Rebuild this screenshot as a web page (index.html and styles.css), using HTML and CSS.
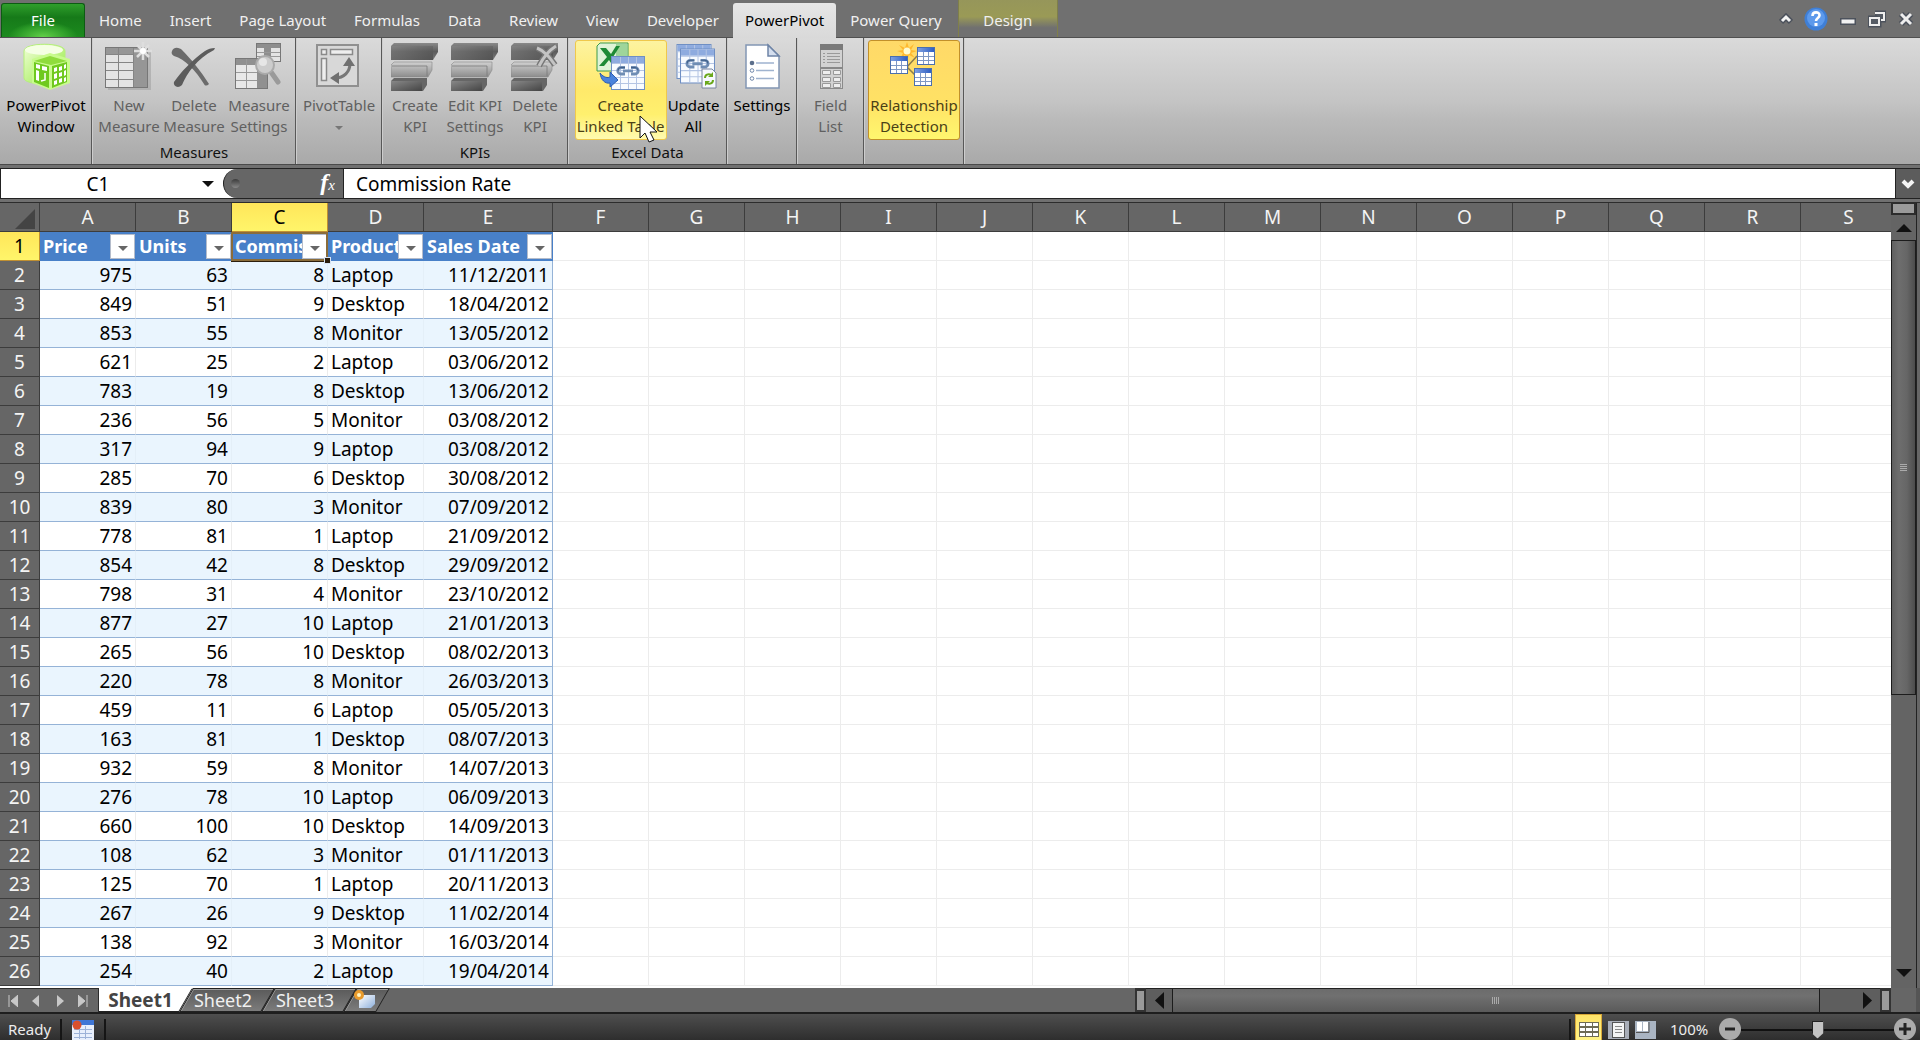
FILE: index.html
```html
<!DOCTYPE html>
<html lang="en">
<head>
<meta charset="utf-8">
<title>Workbook - PowerPivot</title>
<link rel="stylesheet" href="styles.css">
</head>
<body>
<svg class="defs" aria-hidden="true">
  <defs>
    <linearGradient id="barDark" x1="0" y1="0" x2="0" y2="1"><stop offset="0" stop-color="#8a8a8a"/><stop offset=".5" stop-color="#5c5c5c"/><stop offset="1" stop-color="#777"/></linearGradient>
    <linearGradient id="barLight" x1="0" y1="0" x2="0" y2="1"><stop offset="0" stop-color="#d0d0d0"/><stop offset="1" stop-color="#8c8c8c"/></linearGradient>
    <linearGradient id="barDeep" x1="0" y1="0" x2="1" y2="1"><stop offset="0" stop-color="#888"/><stop offset="1" stop-color="#444"/></linearGradient>
    <linearGradient id="green" x1="0" y1="0" x2="1" y2="1"><stop offset="0" stop-color="#f2ffd8"/><stop offset="1" stop-color="#8fe83a"/></linearGradient>
    <linearGradient id="blueHead" x1="0" y1="0" x2="1" y2="0"><stop offset="0" stop-color="#7d9fe0"/><stop offset="1" stop-color="#2f5fc4"/></linearGradient>
    <linearGradient id="sheetPaper" x1="0" y1="0" x2="1" y2="1"><stop offset="0" stop-color="#fff"/><stop offset="1" stop-color="#8eb0dc"/></linearGradient>
    <symbol id="bars" viewBox="0 0 48 50">
      <path d="M0 4l3-3h44v9l-5 8H0z" fill="url(#barDark)"/><path d="M0 4h42v14H0z" fill="url(#barDeep)" opacity=".7"/>
      <path d="M0 23l3-3h38v8l-4 7H0z" fill="url(#barLight)" stroke="#888" stroke-width=".6"/><path d="M1 24h35v10" fill="none" stroke="#7a7a7a" stroke-width=".8"/>
      <path d="M0 39l3-3h33v7l-4 6H0z" fill="#666"/><path d="M0 39h31v10H0z" fill="url(#barDeep)"/>
    </symbol>
    <symbol id="miniTable" viewBox="0 0 18 18">
      <rect x=".5" y=".5" width="17" height="17" fill="#fff" stroke="#4b6fae"/><rect x="1" y="1" width="16" height="4" fill="url(#blueHead)"/>
      <path d="M1 9.500h16M1 13.500h16M6.500 5v12M11.500 5v12" stroke="#7f98c4"/>
    </symbol>
    <symbol id="linkTable" viewBox="0 0 34 34">
      <rect x=".5" y=".5" width="33" height="33" fill="#f8fbff" stroke="#6f8fc4"/><rect x="1" y="1" width="32" height="6" fill="#8eabdf"/>
      <path d="M1 7.500h32M1 14.500h32M1 21.500h32M1 27.500h32M9.500 1v32M17.500 1v32M25.500 1v32" stroke="#b4c5e4"/>
      <path d="M14 11.500h-4a3 3 0 0 0 0 6.500h4M20 11.500h4a3 3 0 0 1 0 6.500h-4M12 14.800h10" fill="none" stroke="#6f8db4" stroke-width="2.800"/><path d="M14 11.500h-4a3 3 0 0 0-3 3M20 11.500h4a3 3 0 0 1 3 3" fill="none" stroke="#3f5f88" stroke-width="1"/>
    </symbol>
  </defs>
</svg>
<div class="app">
  <nav class="tabs">
    <button class="tab file">File</button>
    <button class="tab">Home</button>
    <button class="tab">Insert</button>
    <button class="tab">Page Layout</button>
    <button class="tab">Formulas</button>
    <button class="tab">Data</button>
    <button class="tab">Review</button>
    <button class="tab">View</button>
    <button class="tab">Developer</button>
    <button class="tab active">PowerPivot</button>
    <button class="tab">Power Query</button>
    <button class="tab design">Design</button>
    <div class="window-tools">
      <button aria-label="Minimize ribbon"><svg width="14" height="12"><path d="M2 9l5-5 5 5" fill="none" stroke="#4c525c" stroke-width="6"/><path d="M3 8l4-4 4 4" fill="none" stroke="#f4f4f4" stroke-width="3"/></svg></button>
      <button aria-label="Help"><svg width="24" height="24"><circle cx="12" cy="12" r="11.500" fill="#3f7fd6"/><circle cx="12" cy="11" r="9" fill="#5d9aec"/><path d="M8.500 9c0-5 7-4.500 7-.8 0 3-3.500 2.500-3.500 5.800" fill="none" stroke="#fff" stroke-width="2.600"/><rect x="10.500" y="16" width="3" height="3" fill="#fff"/></svg></button>
      <button aria-label="Minimize"><svg width="18" height="18"><rect x="1" y="8" width="16" height="7" fill="#4c525c"/><rect x="2.500" y="9.500" width="13" height="4" fill="#f2f2f2"/></svg></button>
      <button aria-label="Restore"><svg width="18" height="18"><path d="M7 3h9v7h-3M2 8h9v7H2z" fill="none" stroke="#4c525c" stroke-width="5"/><path d="M7 3h9v7h-3M2 8h9v7H2z" fill="#555b64" stroke="#eee" stroke-width="2"/></svg></button>
      <button aria-label="Close"><svg width="18" height="18"><path d="M4 4l10 10M14 4L4 14" stroke="#4c525c" stroke-width="6"/><path d="M4 4l10 10M14 4L4 14" stroke="#eee" stroke-width="3"/></svg></button>
    </div>
  </nav>

  <section class="ribbon">
    <div class="group g-window"><div class="commands">
      <button class="cmd"><svg viewBox="0 0 48 48"><path d="M2 9C2 0 43 0 43 9v27c0 8-41 8-41 0z" fill="url(#green)" stroke="#b5f07a"/><ellipse cx="22" cy="8" rx="19" ry="5" fill="#f5ffe4"/><path d="M10 17l18-6 20 6v24l-20 7-18-7z" fill="#c9fb8e"/><path d="M12 19l16-5 17 5-16 4z" fill="#8fdc3c"/><path d="M12 20l15 4v22l-15-6zM30 24l15-4v20l-15 6z" fill="#6fc91f"/><path d="M14 22l4 1v4l-4-1zM20 24l5 1v4l-5-1zM14 28l3 1v10l-3-1zM32 26l3-1v4l-3 1zM37 25l3-1v4l-3 1zM42 23l2-1v4l-2 1zM32 32l3-1v5l-3 1zM37 31l3-1v4l-3 1zM42 29l2-1v5l-2 1zM32 39l3-1v4l-3 1zM37 37l3-1v4l-3 1zM42 36l2-1v4l-2 1z" fill="#fff"/><path d="M23 31v7l-4 1" fill="none" stroke="#fff" stroke-width="1.500"/></svg><span>PowerPivot<br>Window</span></button>
    </div></div>
    <div class="group g-measures"><div class="commands">
      <button class="cmd off"><svg viewBox="0 0 48 48"><rect x="3" y="8" width="43" height="40" fill="#999" opacity=".5"/><rect x=".5" y="5.500" width="42" height="40" fill="#e4e4e4" stroke="#777"/><path d="M1 6h41v6H1zM28 12h14v33H28z" fill="#969696"/><path d="M1 12.500h27M1 20.500h27M1 28.500h27M1 37.500h27M13.500 6v39M28.500 6v39" stroke="#858585"/><path d="M38 0v18M29 9h18M32 3l12 12M44 3L32 15" stroke="#dedede" stroke-width="2.500"/><circle cx="38" cy="9" r="3" fill="#fff"/></svg><span>New<br>Measure</span></button>
      <button class="cmd off"><svg viewBox="0 0 48 48"><path d="M2 9c2-5 8-3 10-1 9 9 18 20 27 34-2 2-4 2-5 0C26 29 15 17 4 14c-2-1-3-3-2-5z" fill="#6b6b6b"/><path d="M45 6c-4 0-7 1-10 3C23 17 10 31 4 40c-1 4 4 7 8 3C17 31 27 17 44 8z" fill="#5c5c5c"/></svg><span>Delete<br>Measure</span></button>
      <button class="cmd off"><svg viewBox="0 0 48 48"><rect x="21.500" y="1.500" width="24" height="18" fill="#e4e4e4" stroke="#777"/><path d="M22 2h23v4H22zM29 2h7v17h-7z" fill="#8e8e8e"/><path d="M22 10.500h23M22 14.500h23" stroke="#999"/><rect x=".5" y="16.500" width="32" height="30" fill="#e8e8e8" stroke="#777"/><path d="M1 17h31v6H1zM22 23h10v23H22z" fill="#909090"/><path d="M1 30.500h21M1 38.500h21M11.500 17v29" stroke="#999"/><path d="M36 30l7 10" stroke="#9a9a9a" stroke-width="5" stroke-linecap="round"/><circle cx="30" cy="23" r="9" fill="#ccc" stroke="#aaa" stroke-width="2"/><circle cx="28" cy="20" r="4" fill="#e6e6e6"/></svg><span>Measure<br>Settings</span></button>
    </div><div class="caption">Measures</div></div>
    <div class="group g-pivot"><div class="commands">
      <button class="cmd off"><svg viewBox="0 0 48 48"><rect x="2" y="3" width="41" height="41" fill="#d8d8d8" stroke="#909090" stroke-width="2"/><path d="M6.500 7.500h5v5h-5zM15.500 7.500h22v5h-22zM6.500 16.500h5v22h-5z" fill="#eee" stroke="#8a8a8a" stroke-width="1.500"/><path d="M20 36c9 0 15-6 15-15" fill="none" stroke="#777" stroke-width="3"/><path d="M28 24l6-9 6 9zM24 30l-9 6 9 6z" fill="#707070"/></svg><span>PivotTable<br><i class="caret small"></i></span></button>
    </div></div>
    <div class="group g-kpis"><div class="commands">
      <button class="cmd off"><svg viewBox="0 0 48 48"><use href="#bars" width="48" height="50"/></svg><span>Create<br>KPI</span></button>
      <button class="cmd off"><svg viewBox="0 0 48 48"><use href="#bars" width="48" height="50"/></svg><span>Edit KPI<br>Settings</span></button>
      <button class="cmd off"><svg viewBox="0 0 48 48"><use href="#bars" width="48" height="50"/><path d="M26 6c8 3 13 10 18 17M45 4c-8 5-13 12-17 20" fill="none" stroke="#777" stroke-width="6"/><path d="M26 6c8 3 13 10 18 17M45 4c-8 5-13 12-17 20" fill="none" stroke="#c4c4c4" stroke-width="3"/></svg><span>Delete<br>KPI</span></button>
    </div><div class="caption">KPIs</div></div>
    <div class="group g-excel"><div class="commands">
      <button class="cmd hover"><svg viewBox="0 0 48 48"><path d="M3 1h28v28H0V4z" fill="#dff3d6" stroke="#3d9a4a"/><path d="M19 2h11v26H19z" fill="#9fd59a"/><path d="M3 6h6l5 6 5-8h4l-7 11 6 9h-6l-4-6-5 6H2l8-9z" fill="#1e8a35"/><use href="#linkTable" x="14" y="14" width="34" height="34"/><path d="M3 31c4 5 8 5 10 4v-5l8 8-8 7v-4C8 42 4 38 3 31z" fill="#4a83dc" stroke="#2b5cb0"/></svg><span>Create<br>Linked Table</span></button>
      <button class="cmd narrow"><svg viewBox="0 0 48 48"><use href="#linkTable" x="6" y="2" width="36" height="35"/><use href="#linkTable" x="10" y="6" width="35" height="36"/><path d="M32 27h10l4 4v15H32z" fill="#f6f9ff" stroke="#7a86a0"/><path d="M35 36c0-4 5-5 7-2M43 38c0 4-5 5-7 2" fill="none" stroke="#6aa81c" stroke-width="2"/><path d="M43 30v5h-5zM35 44v-5h5z" fill="#6aa81c"/></svg><span>Update<br>All</span></button>
    </div><div class="caption">Excel Data</div></div>
    <div class="group g-settings"><div class="commands">
      <button class="cmd"><svg viewBox="0 0 48 48"><path d="M8 3h22l11 11v32H8z" fill="#fff" stroke="#8296b4" stroke-width="1.500"/><path d="M30 3v11h11z" fill="#d4deee" stroke="#6e84a6" stroke-width="1.500"/><path d="M18 21h18M18 28.500h18M18 36.500h18" stroke="#9fb3cf" stroke-width="1.500"/><circle cx="14" cy="21" r="2.300" fill="#5c6f8c"/><circle cx="14" cy="28.500" r="1.800" fill="#fff" stroke="#7289ab"/><circle cx="14" cy="36.500" r="1.800" fill="#fff" stroke="#7289ab"/></svg><span>Settings</span></button>
    </div></div>
    <div class="group g-field"><div class="commands">
      <button class="cmd off"><svg viewBox="0 0 48 48"><rect x="13.500" y="2.500" width="22" height="44" fill="#d2d2d2" stroke="#8a8a8a"/><path d="M13 2h23v6H13z" fill="#7a7a7a"/><path d="M16 11.500h2M20 11.500h13M16 14.500h2M20 14.500h13M16 17.500h2M20 17.500h13M16 20.500h2M20 20.500h13" stroke="#999"/><path d="M13 25h23v2H13z" fill="#888"/><path d="M15.500 28.500h8v4h-8zM26.500 28.500h7v4h-7zM15.500 35.500h8v4h-8zM26.500 35.500h7v4h-7zM15.500 41.500h8v4h-8zM26.500 41.500h7v4h-7z" fill="#eee" stroke="#999"/></svg><span>Field<br>List</span></button>
    </div></div>
    <div class="group g-relation"><div class="commands">
      <button class="cmd hover on"><svg viewBox="0 0 48 48"><path d="M17 25l10-11M17 25l9 9" stroke="#8a7b4c" stroke-width="1.500"/><path d="M17 0l2 6 5-4-3 6 6 1-6 2 4 5-6-3-2 6-2-6-5 4 3-6-6-2 6-1-4-5 6 3z" fill="#ffb92e"/><circle cx="17" cy="9" r="3.500" fill="#fffbd0"/><use href="#miniTable" x="0" y="14" width="18" height="18"/><use href="#miniTable" x="27" y="5" width="18" height="18"/><use href="#miniTable" x="24" y="26" width="18" height="18"/></svg><span>Relationship<br>Detection</span></button>
    </div></div>
  </section>

  <section class="formula">
    <div class="formula-row">
      <input class="name-box" aria-label="Name box" value="C1">
      <button class="name-drop" aria-label="Show names"><i class="caret"></i></button>
      <div class="fx"><i class="dot"></i><button class="fx-button" aria-label="Insert function"><b>f</b>x</button></div>
      <input class="formula-input" aria-label="Formula" value="Commission Rate">
      <button class="expand" aria-label="Expand formula bar"><svg width="14" height="12"><path d="M2 3l5 5 5-5" fill="none" stroke="#f4f4f4" stroke-width="4"/></svg></button>
    </div>
  </section>

  <main class="work">
    <div class="sheet">
      <table>
        <colgroup><col class="c-row"><col><col><col><col><col class="c-date"><col><col><col><col><col><col><col><col><col><col><col><col><col><col></colgroup>
        <thead><tr><th class="corner"><svg width="20" height="20"><path d="M20 0v20H0z" fill="#444"/></svg></th><th>A</th><th>B</th><th class="picked">C</th><th>D</th><th>E</th><th>F</th><th>G</th><th>H</th><th>I</th><th>J</th><th>K</th><th>L</th><th>M</th><th>N</th><th>O</th><th>P</th><th>Q</th><th>R</th><th>S</th></tr></thead>
        <tbody>
        <tr class="head"><th scope="row" class="picked">1</th>
          <td><div class="field"><span>Price</span><button aria-label="Filter Price"><i class="caret"></i></button></div></td>
          <td><div class="field"><span>Units</span><button aria-label="Filter Units"><i class="caret"></i></button></div></td>
          <td class="selected"><div class="field"><span>Commission Rate</span><button aria-label="Filter Commission Rate"><i class="caret"></i></button></div><i class="handle"></i></td>
          <td><div class="field"><span>Product</span><button aria-label="Filter Product"><i class="caret"></i></button></div></td>
          <td><div class="field"><span>Sales Date</span><button aria-label="Filter Sales Date"><i class="caret"></i></button></div></td>
          <td class="rest" colspan="14"></td></tr>
        <tr><th scope="row">2</th><td>975</td><td>63</td><td>8</td><td>Laptop</td><td>11/12/2011</td><td class="rest" colspan="14"></td></tr>
        <tr><th scope="row">3</th><td>849</td><td>51</td><td>9</td><td>Desktop</td><td>18/04/2012</td><td class="rest" colspan="14"></td></tr>
        <tr><th scope="row">4</th><td>853</td><td>55</td><td>8</td><td>Monitor</td><td>13/05/2012</td><td class="rest" colspan="14"></td></tr>
        <tr><th scope="row">5</th><td>621</td><td>25</td><td>2</td><td>Laptop</td><td>03/06/2012</td><td class="rest" colspan="14"></td></tr>
        <tr><th scope="row">6</th><td>783</td><td>19</td><td>8</td><td>Desktop</td><td>13/06/2012</td><td class="rest" colspan="14"></td></tr>
        <tr><th scope="row">7</th><td>236</td><td>56</td><td>5</td><td>Monitor</td><td>03/08/2012</td><td class="rest" colspan="14"></td></tr>
        <tr><th scope="row">8</th><td>317</td><td>94</td><td>9</td><td>Laptop</td><td>03/08/2012</td><td class="rest" colspan="14"></td></tr>
        <tr><th scope="row">9</th><td>285</td><td>70</td><td>6</td><td>Desktop</td><td>30/08/2012</td><td class="rest" colspan="14"></td></tr>
        <tr><th scope="row">10</th><td>839</td><td>80</td><td>3</td><td>Monitor</td><td>07/09/2012</td><td class="rest" colspan="14"></td></tr>
        <tr><th scope="row">11</th><td>778</td><td>81</td><td>1</td><td>Laptop</td><td>21/09/2012</td><td class="rest" colspan="14"></td></tr>
        <tr><th scope="row">12</th><td>854</td><td>42</td><td>8</td><td>Desktop</td><td>29/09/2012</td><td class="rest" colspan="14"></td></tr>
        <tr><th scope="row">13</th><td>798</td><td>31</td><td>4</td><td>Monitor</td><td>23/10/2012</td><td class="rest" colspan="14"></td></tr>
        <tr><th scope="row">14</th><td>877</td><td>27</td><td>10</td><td>Laptop</td><td>21/01/2013</td><td class="rest" colspan="14"></td></tr>
        <tr><th scope="row">15</th><td>265</td><td>56</td><td>10</td><td>Desktop</td><td>08/02/2013</td><td class="rest" colspan="14"></td></tr>
        <tr><th scope="row">16</th><td>220</td><td>78</td><td>8</td><td>Monitor</td><td>26/03/2013</td><td class="rest" colspan="14"></td></tr>
        <tr><th scope="row">17</th><td>459</td><td>11</td><td>6</td><td>Laptop</td><td>05/05/2013</td><td class="rest" colspan="14"></td></tr>
        <tr><th scope="row">18</th><td>163</td><td>81</td><td>1</td><td>Desktop</td><td>08/07/2013</td><td class="rest" colspan="14"></td></tr>
        <tr><th scope="row">19</th><td>932</td><td>59</td><td>8</td><td>Monitor</td><td>14/07/2013</td><td class="rest" colspan="14"></td></tr>
        <tr><th scope="row">20</th><td>276</td><td>78</td><td>10</td><td>Laptop</td><td>06/09/2013</td><td class="rest" colspan="14"></td></tr>
        <tr><th scope="row">21</th><td>660</td><td>100</td><td>10</td><td>Desktop</td><td>14/09/2013</td><td class="rest" colspan="14"></td></tr>
        <tr><th scope="row">22</th><td>108</td><td>62</td><td>3</td><td>Monitor</td><td>01/11/2013</td><td class="rest" colspan="14"></td></tr>
        <tr><th scope="row">23</th><td>125</td><td>70</td><td>1</td><td>Laptop</td><td>20/11/2013</td><td class="rest" colspan="14"></td></tr>
        <tr><th scope="row">24</th><td>267</td><td>26</td><td>9</td><td>Desktop</td><td>11/02/2014</td><td class="rest" colspan="14"></td></tr>
        <tr><th scope="row">25</th><td>138</td><td>92</td><td>3</td><td>Monitor</td><td>16/03/2014</td><td class="rest" colspan="14"></td></tr>
        <tr><th scope="row">26</th><td>254</td><td>40</td><td>2</td><td>Laptop</td><td>19/04/2014</td><td class="rest" colspan="14"></td></tr>
        </tbody>
      </table>
    </div>
    <div class="vscroll">
      <div class="split"></div>
      <button aria-label="Scroll up"><svg width="16" height="8"><path d="M8 0l8 8H0z" fill="#111"/></svg></button>
      <div class="vtrack"><div class="vthumb"><i class="grip"></i></div></div>
      <button class="down" aria-label="Scroll down"><svg width="16" height="8"><path d="M0 0h16L8 8z" fill="#111"/></svg></button>
    </div>
  </main>

  <div class="bottom">
    <div class="sheet-nav">
      <button aria-label="First sheet"><svg width="10" height="12"><path d="M1 0v12M10 0v12L3 6z" fill="#c8c8c8" stroke="#c8c8c8"/></svg></button>
      <button aria-label="Previous sheet"><svg width="10" height="12"><path d="M8 0v12L1 6z" fill="#c8c8c8"/></svg></button>
      <button aria-label="Next sheet"><svg width="10" height="12"><path d="M2 0v12l7-6z" fill="#c8c8c8"/></svg></button>
      <button aria-label="Last sheet"><svg width="10" height="12"><path d="M9 0v12M0 0v12l7-6z" fill="#c8c8c8" stroke="#c8c8c8"/></svg></button>
    </div>
    <button class="sheet-tab current"><span>Sheet1</span></button>
    <button class="sheet-tab"><span>Sheet2</span></button>
    <button class="sheet-tab"><span>Sheet3</span></button>
    <button class="sheet-tab new" aria-label="New sheet"><svg width="22" height="20"><path d="M5 5h16v9l-4 4H5z" fill="url(#sheetPaper)"/><circle cx="5" cy="5" r="5" fill="#e89a2c"/><circle cx="5" cy="5" r="2" fill="#fff3c0"/></svg></button>
    <div class="fill"></div>
    <div class="hsplit"></div>
    <div class="hscroll">
      <button aria-label="Scroll left"><svg width="9" height="17"><path d="M9 0v17L0 8.500z" fill="#111"/></svg></button>
      <div class="htrack"><div class="hthumb"><i class="grip"></i></div></div>
      <button aria-label="Scroll right"><svg width="9" height="17"><path d="M0 0v17l9-8.500z" fill="#111"/></svg></button>
    </div>
    <div class="hsplit last"></div>
    <div class="end"></div>
  </div>

  <footer class="status">
    <span class="ready">Ready</span>
    <button class="macro" aria-label="Record macro"><svg width="22" height="20"><rect width="22" height="20" fill="#e8effc"/><rect width="22" height="5" fill="#3f76d6"/><path d="M2 9.500h18M2 13.500h18M2 17.500h18M7.500 6v13M13.500 6v13" stroke="#9db2d8"/><circle cx="5" cy="5" r="4.500" fill="#d8502e"/></svg></button>
    <div class="fill"></div>
    <div class="views">
      <button class="on" aria-label="Normal view"><svg width="20" height="15"><rect width="20" height="15" fill="#6d6a55"/><path d="M1 1h5v3H1zM7 1h6v3H7zM14 1h5v3h-5zM1 6h5v3H1zM7 6h6v3H7zM14 6h5v3h-5zM1 11h5v3H1zM7 11h6v3H7zM14 11h5v3h-5z" fill="#fff"/></svg></button>
      <button aria-label="Page layout view"><svg width="21" height="18"><rect width="21" height="18" fill="#a9aeb8"/><rect x="4.500" y="1.500" width="12" height="15" fill="#f4f4f4" stroke="#555"/><path d="M7 5.500h7M7 8.500h7M7 11.500h7" stroke="#888"/></svg></button>
      <button aria-label="Page break view"><svg width="21" height="18"><rect width="21" height="18" fill="#a9b4c2"/><path d="M2 1h5v9H2zM8 1h5v9H8z" fill="#fff"/><path d="M1 11.500h13V1" fill="none" stroke="#555"/></svg></button>
    </div>
    <span class="percent">100%</span>
    <button class="round" aria-label="Zoom out"><svg width="22" height="22"><circle cx="11" cy="11" r="11" fill="#ababab"/><path d="M6 11h10" stroke="#222" stroke-width="3"/></svg></button>
    <input class="zoom" type="range" min="0" max="100" value="50" aria-label="Zoom">
    <button class="round" aria-label="Zoom in"><svg width="22" height="22"><circle cx="11" cy="11" r="11" fill="#ababab"/><path d="M5 11h12M11 5v12" stroke="#222" stroke-width="3"/></svg></button>
  </footer>
  <svg class="pointer" width="20" height="29" aria-hidden="true"><path d="M1 1v22l5-5 4 9 5-2-4-8h7z" fill="#fff" stroke="#111"/></svg>
</div>
</body>
</html>
```
FILE: styles.css
```css
* { box-sizing: border-box; }
body { margin: 0; background: #666; font: 15px/21px "Noto Sans", "Open Sans", sans-serif; color: #111; }
button, input { font: inherit; color: inherit; margin: 0; padding: 0; border: 0; border-radius: 0; background: none; }
button svg { display: block; }
.defs { position: absolute; width: 0; height: 0; }
.app { position: relative; display: flex; flex-direction: column; height: 100vh; overflow: hidden; }
.fill { flex: 1; }

.caret { display: inline-block; border: 5px solid transparent; border-top-color: currentColor; border-bottom: 0; vertical-align: middle; }
.caret.small { border-width: 4px 4px 0; color: #777; }

/* tab strip */
.tabs { display: flex; align-items: flex-end; flex: none; height: 38px; background: #707070; border-bottom: 1px solid #505050; }
.tab { height: 34px; padding: 0 14px; color: #f0f0f0; white-space: nowrap; }
.file { width: 84px; margin-left: 1px; color: #fff; border: 1px solid #0c5c12; border-bottom: 0; border-radius: 3px 3px 0 0; background: radial-gradient(ellipse at 50% 100%, #62d048 0, #2b9a27 45%, transparent 60%) bottom / 100% 18px no-repeat, linear-gradient(#2f9e2c, #167a19 40%, #1c8a1e); }
.tab.active { height: 35px; margin-bottom: -1px; padding: 0 12px; color: #000; background: linear-gradient(#e6e6e6, #d9d9d9); border-radius: 3px 3px 0 0; }
.tab.design { height: 37px; width: 100px; padding: 4px 0 0; margin-left: 2px; background: linear-gradient(#96965a, #9a9a56 45%, #707070 75%); border: solid #7f7f4a; border-width: 0 1px; }
.window-tools { display: flex; align-items: center; gap: 11px; height: 37px; margin-left: auto; padding-right: 5px; }

/* ribbon */
.ribbon { display: flex; flex: none; height: 127px; background: linear-gradient(#dadada, #c4c4c4 50%, #bababa 65%, #a9a9a9); border-bottom: 1px solid #4a4a4a; }
.group { display: flex; flex-direction: column; flex: none; border-right: 1px solid #585858; box-shadow: 1px 0 #cdcdcd; padding: 2px 0 0 1px; }
.commands { display: flex; justify-content: center; height: 100px; }
.g-window { width: 92px; }
.g-measures { width: 204px; }
.g-pivot { width: 86px; }
.g-kpis { width: 186px; }
.g-excel { width: 159px; }
.g-settings { width: 70px; }
.g-field { width: 67px; }
.g-relation { width: 100px; }
.cmd { display: flex; flex-direction: column; align-items: center; justify-content: flex-start; gap: 5px; width: 65px; height: 100px; border: 1px solid transparent; border-radius: 3px; white-space: nowrap; text-align: center; color: #000; }
.cmd svg { flex: none; width: 48px; height: 48px; margin-top: 1px; overflow: visible; }
.cmd span { display: block; }
.cmd.off { color: #606060; }
.g-kpis .cmd { width: 60px; }
.cmd.hover { width: 92px; color: #4a4016; background: linear-gradient(#fdf3a0, #ffe96a 50%, #fff06e 75%, #fffbb0); border-color: #efc84c; }
.cmd.on { background: linear-gradient(#ffd968, #ffe165 60%, #fff66e); border-color: #c2902a; }
.cmd.narrow { width: 54px; }
.caption { text-align: center; margin-top: 2px; }

/* formula bar */
.formula { flex: none; height: 38px; padding: 3px 0; background: #707070; border-bottom: 1px solid #2c2c2c; }
.formula-row { display: flex; height: 31px; border: 1px solid #222; border-right: 0; background: #fff; font-size: 19px; }
.name-box { width: 192px; padding: 1px 0 0 2px; text-align: center; color: #000; }
.name-drop { display: grid; place-items: center; width: 30px; }
.name-drop .caret { border-width: 6px 6px 0; }
.fx { display: flex; align-items: center; justify-content: space-between; width: 121px; padding: 0 8px 0 7px; border: solid #222; border-width: 0 1px; border-radius: 15px 0 0 15px; background: #666; color: #fff; }
.dot { width: 9px; height: 9px; border-radius: 50%; background: linear-gradient(#3c3c3c, #888); }
.fx-button { font: italic 15px/24px "Liberation Serif", serif; }
.fx-button b { font-size: 24px; }
.formula-input { flex: 1; min-width: 0; padding: 1px 12px 0; color: #000; }
.expand { display: grid; place-items: center; width: 25px; background: #5c5c5c; border-left: 1px solid #222; }

/* worksheet */
.work { display: flex; flex: 1; min-height: 0; }
.sheet { flex: 1; min-width: 0; overflow: hidden; background: #fff; }
table { table-layout: fixed; width: 1897px; border-collapse: separate; border-spacing: 0; font-size: 19px; line-height: 28px; color: #000; }
col { width: 96px; }
.c-row { width: 40px; }
.c-date { width: 129px; }
th { height: 29px; padding: 0; font-weight: 400; color: #f4f4f4; background: #666; border: solid #3c3c3c; border-width: 0 1px 1px 0; }
.corner svg { display: block; margin: 4px 4px 0 auto; }
th.picked { color: #000; background: linear-gradient(#ffe65a, #fff56a); border-color: #c09032; }
td { height: 29px; padding: 0 3px; text-align: right; border: solid #ececec; border-width: 0 1px 1px 0; border-bottom-color: #95b3d7; }
td:nth-child(5) { text-align: left; }
td:nth-child(6) { border-right-color: #95b3d7; }
tbody tr:nth-child(even) td { background: #eaf5fe; border-right-color: #e4eff8; }
tbody tr:nth-child(even) td:nth-child(6) { border-right-color: #95b3d7; }
tbody tr td.rest, tbody tr:nth-child(even) td.rest { border-right: 0; border-bottom-color: #ececec; background: repeating-linear-gradient(90deg, transparent 0 95px, #ececec 95px 96px); }
.head td { position: relative; color: #fff; font-size: 18px; font-weight: 700; background: #4880c8; border-color: #4880c8; }
.field { display: flex; align-items: center; height: 28px; margin-right: -3px; }
.field span { flex: 1; min-width: 0; overflow: hidden; white-space: nowrap; text-align: left; }
.field button { flex: none; width: 25px; height: 25px; background: #fff; border: 1px solid #b4bccb; color: #666; line-height: 16px; }
.selected::after { content: ""; position: absolute; inset: 0 -1px -1px -1px; border: 2px solid #8a6c3a; box-shadow: 0 1px #2c1e0c; pointer-events: none; }
.head .selected { z-index: 1; }
.handle { position: absolute; z-index: 1; right: -3px; bottom: -3px; width: 5px; height: 5px; background: #2c1e0c; box-shadow: 0 0 0 1px #d8e4f4; }

/* vertical scrollbar */
.vscroll { display: flex; flex-direction: column; align-items: center; flex: none; width: 29px; padding-right: 1px; background: #646464; border-right: 3px solid #666; box-shadow: inset -1px 0 #222; }
.split { flex: none; align-self: stretch; height: 12px; background: #9a9a9a; border: 2px solid #2c2c2c; border-top-width: 1px; }
.vscroll button { flex: none; height: 25px; }
.vscroll .down { padding-bottom: 6px; }
.vtrack { flex: 1; align-self: stretch; }
.vthumb { display: grid; place-items: center; height: 63%; border: 1px solid #1c1c1c; background: linear-gradient(90deg, #606060, #6e6e6e 30%, #666 65%, #4c4c4c); }
.vthumb .grip { width: 7px; height: 8px; background: repeating-linear-gradient(#aaa 0 1px, transparent 1px 2px); }

/* sheet tabs and horizontal scrollbar */
.bottom { display: flex; flex: none; height: 26px; background: #666; border-bottom: 2px solid #1e1e1e; font-size: 18px; line-height: 24px; }
.sheet-nav { position: relative; z-index: 2; display: flex; justify-content: space-between; align-items: center; width: 99px; padding: 0 10px 0 8px; background: #666; border: solid #2c2c2c; border-width: 1px 1px 0 0; }
.sheet-tab { position: relative; z-index: 0; width: 82px; height: 24px; padding-right: 8px; color: #f0f0f0; }
.sheet-tab::before { content: ""; position: absolute; z-index: -1; inset: 0; transform: skewX(-30deg); background: linear-gradient(#5a5a5a, #7c7c7c); border: 1px solid #222; box-shadow: inset 1px 1px #a0a0a0; }
.sheet-tab.current { z-index: 1; width: 87px; padding-right: 4px; color: #444; font-size: 19px; font-weight: 700; }
.sheet-tab.current::before { left: -20px; background: #fff; border-top-color: #fff; box-shadow: none; }
.sheet-tab.new { width: 33px; padding: 0 0 0 4px; }
.hsplit { width: 11px; background: #9a9a9a; border: 2px solid #333; border-top-width: 3px; }
.hscroll { display: flex; flex: 0 1 734px; border-top: 1px solid #222; background: #5e5e5e; }
.hscroll button { display: grid; place-items: center; flex: none; width: 26px; }
.htrack { flex: 1; }
.hthumb { display: grid; place-items: center; width: 95%; height: 23px; border: solid #1c1c1c; border-width: 0 1px; background: linear-gradient(#6c6c6c, #707070 30%, #5a5a5a); }
.hthumb .grip { width: 8px; height: 7px; background: repeating-linear-gradient(90deg, #aaa 0 1px, transparent 1px 2px); }
.end { width: 29px; border-right: 4px solid #555; }

/* status bar */
.status { display: flex; flex: none; height: 26px; padding: 5px 4px 0 0; background: linear-gradient(#4e4e4e, #2e2e2e); color: #ececec; line-height: 20px; overflow: hidden; }
.status > * { flex: none; height: 21px; }
.status .fill { flex: 1; }
.ready { width: 62px; padding-left: 8px; border-right: 2px solid #151515; }
.macro { width: 44px; padding-left: 10px; border-right: 2px solid #151515; }
.views { display: flex; gap: 6px; padding-left: 4px; margin-right: 14px; border-left: 2px solid #151515; }
.views button { display: grid; place-items: center; }
.views .on { width: 27px; height: 30px; margin-top: -5px; background: linear-gradient(#ffe468, #fff48a); border: 1px solid #d8a838; }
.percent { width: 49px; }
.round { width: 22px; }
.status .round { height: 22px; margin-top: -1px; }
.zoom { width: 153px; appearance: none; background: linear-gradient(#111 0 0) center / 100% 2px no-repeat; }
.zoom::-webkit-slider-thumb { appearance: none; width: 12px; height: 18px; background: #c4c4c4; border: 1px solid #222; clip-path: polygon(0 0, 100% 0, 100% 70%, 50% 100%, 0 70%); }

.pointer { position: absolute; left: 639px; top: 115px; }
```
